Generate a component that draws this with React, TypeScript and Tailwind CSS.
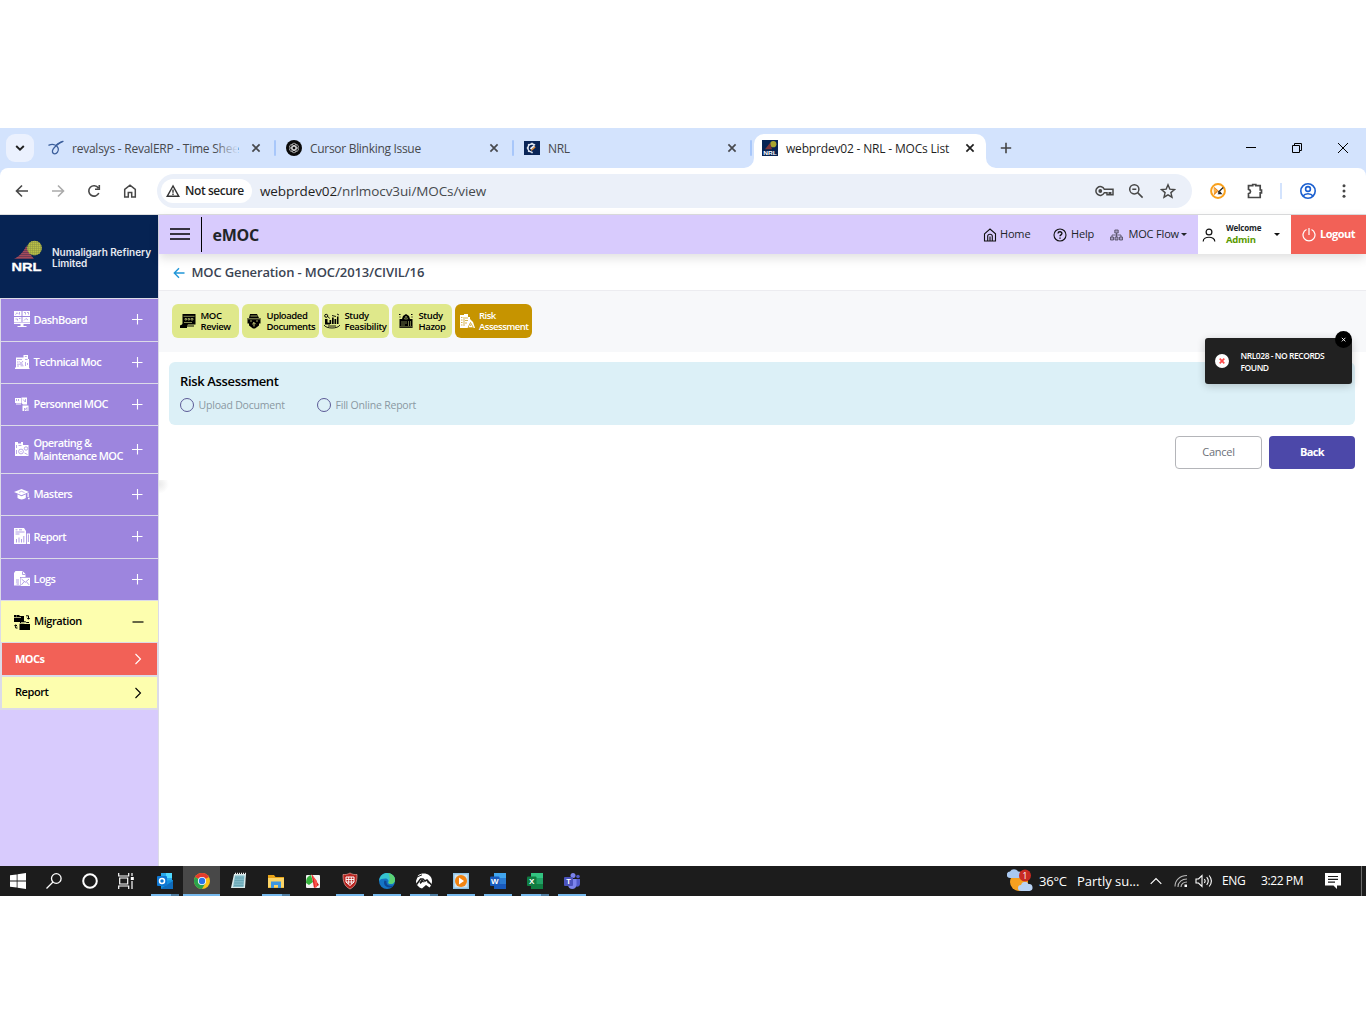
import type { ReactNode } from "react";

interface IconProps {
  className?: string;
}

interface MenuItem {
  label: ReactNode;
  icon: ReactNode;
  height: string;
}

/* ---------- small shared glyphs ---------- */

const CloseGlyph = ({ className = "" }: IconProps) => (
  <svg className={className} width="16" height="16" viewBox="0 0 16 16" fill="none" stroke="currentColor" strokeWidth="1.700">
    <path d="M4.400 4.400l7.200 7.200M11.600 4.400l-7.200 7.200" />
  </svg>
);

const Plus = () => (
  <svg width="12" height="12" viewBox="0 0 12 12" stroke="white" strokeWidth="1.100">
    <path d="M6.500 1v10.500M1 6.500h10.500" />
  </svg>
);

const ChevronRight = () => (
  <svg width="12" height="12" viewBox="0 0 12 12" fill="none" stroke="currentColor" strokeWidth="1.100">
    <path d="M3.500 1l5 5-5 5" />
  </svg>
);

const NrlMark = () => (
  <svg width="16" height="16" viewBox="0 0 16 16">
    <rect width="16" height="16" fill="#062353" />
    <circle cx="11.300" cy="4.200" r="3.100" fill="#a9a52f" />
    <path d="M3 9.200L8 3l2 6.200z" fill="#7d3437" />
    <text x="1.300" y="15.300" fontSize="5.500" fontWeight="700" fill="white" fontFamily="Liberation Sans" textLength="13.500" lengthAdjust="spacingAndGlyphs">
      NRL
    </text>
  </svg>
);

/* ---------- browser chrome ---------- */

const SwirlFavicon = () => (
  <svg width="16" height="16" viewBox="0 0 16 16" fill="none" stroke="#3c5f9c" strokeWidth="1.300" strokeLinecap="round">
    <path d="M1 5.200C3 4.300 5 4.200 7 5c3.500 1.500 4.200 4.800 2.500 7.200-1.400 2.100-4.300 2.200-5 0C3.700 9.500 6 7.500 9 5 11 3.300 12.500 2 15 1.300" />
    <path d="M8 5.300c1.500-2 3.500-2.500 6.500-3.800" />
  </svg>
);

const GptFavicon = () => (
  <svg width="16" height="16" viewBox="0 0 16 16" fill="none">
    <circle cx="8" cy="8" r="8" fill="#0a0a0a" />
    <g stroke="#cfcfcf" strokeWidth="0.700">
      <rect x="6" y="3.200" width="4" height="7" rx="2" transform="rotate(0 8 8)" />
      <rect x="6" y="3.200" width="4" height="7" rx="2" transform="rotate(60 8 8)" />
      <rect x="6" y="3.200" width="4" height="7" rx="2" transform="rotate(120 8 8)" />
      <rect x="6" y="3.200" width="4" height="7" rx="2" transform="rotate(180 8 8)" />
      <rect x="6" y="3.200" width="4" height="7" rx="2" transform="rotate(240 8 8)" />
      <rect x="6" y="3.200" width="4" height="7" rx="2" transform="rotate(300 8 8)" />
    </g>
  </svg>
);

const GearFavicon = () => (
  <svg width="16" height="16" viewBox="0 0 16 16" fill="none">
    <rect y="1" width="16" height="14" fill="#092457" />
    <circle cx="8" cy="8" r="4.100" stroke="#e8edf6" strokeWidth="1.500" strokeDasharray="15.500 10.300" transform="rotate(95 8 8)" />
    <path d="M8 2.800v1.500M4.200 4.200l1 1M2.800 8h1.500M4.200 11.800l1-1M8 13.200v-1.500" stroke="#e8edf6" strokeWidth="1.500" />
    <path d="M6.500 9L10.300 5.700" stroke="#e8edf6" strokeWidth="2" />
    <path d="M7.500 11l4-3.500-.5-1.300-4 3.500z" fill="#e88a2d" />
  </svg>
);

const Tab = ({ icon, title, fade }: { icon: ReactNode; title: string; fade?: boolean }) => (
  <div className="flex h-10 w-[238px] items-center text-[#47494d]">
    <span className="mr-2 flex">{icon}</span>
    <span className={`relative mt-[2px] w-[166px] whitespace-nowrap text-[12px] ${fade ? "tracking-[-0.24px]" : "tracking-[-0.3px]"}`}>
      {title}
      {fade && <span className="absolute right-0 top-0 h-full w-6 bg-gradient-to-r from-transparent to-[#d3e3fd]" />}
    </span>
    <CloseGlyph className="ml-[10px]" />
    <span className="ml-[10px] h-4 w-[2px] rounded bg-[#a8c7fa]" />
  </div>
);

const TabStrip = () => (
  <div className="flex h-10 bg-[#d3e3fd]">
    <div className="ml-[6px] mt-[6px] flex h-7 w-7 items-center justify-center rounded-[9px] bg-[#ebf1fe]">
      <svg width="12" height="12" viewBox="0 0 12 12" fill="none" stroke="#1f1f1f" strokeWidth="1.900">
        <path d="M2.200 4l3.800 3.700L9.800 4" />
      </svg>
    </div>
    <div className="ml-[14px] flex">
      <Tab icon={<SwirlFavicon />} title="revalsys - RevalERP - Time Shee" fade />
      <Tab icon={<GptFavicon />} title="Cursor Blinking Issue" />
      <div className="w-[230px] overflow-hidden">
        <Tab icon={<GearFavicon />} title="NRL" />
      </div>
    </div>
    <div className="relative mt-[6px] flex h-[34px] w-[232px] items-center rounded-t-[10px] bg-white pb-[5px] pl-2 text-[#1f1f1f]">
      <svg className="absolute -left-[10px] bottom-0" width="10" height="10">
        <path d="M10 0v10H0A10 10 0 0 0 10 0z" fill="white" />
      </svg>
      <svg className="absolute -right-[10px] bottom-0" width="10" height="10">
        <path d="M0 0v10h10A10 10 0 0 1 0 0z" fill="white" />
      </svg>
      <div className="mb-px">
        <NrlMark />
      </div>
      <span className="ml-2 w-[166px] whitespace-nowrap text-[12px] tracking-[-0.18px]">webprdev02 - NRL - MOCs List</span>
      <CloseGlyph className="mb-px ml-[10px]" />
    </div>
    <svg className="ml-[13px] mt-[13px]" width="14" height="14" viewBox="0 0 14 14" stroke="#444" strokeWidth="1.600">
      <path d="M7 1.800v10.500M1.800 7h10.400" />
    </svg>
    <div className="ml-auto mt-[13px] flex h-[14px] items-center text-black">
      <svg width="14" height="14" viewBox="0 0 14 14" stroke="currentColor">
        <path d="M2 6.500h10" />
      </svg>
      <svg className="ml-8" width="14" height="14" viewBox="0 0 14 14" fill="none" stroke="currentColor">
        <path d="M2.500 4.500h7v7h-7zM4.500 4.500v-2h7v7h-2" />
      </svg>
      <svg className="ml-8 mr-4" width="14" height="14" viewBox="0 0 14 14" stroke="currentColor">
        <path d="M2 2l10 10M12 2L2 12" />
      </svg>
    </div>
  </div>
);

const Toolbar = () => (
  <div className="bg-[#d3e3fd]">
    <div className="flex h-[46px] items-center rounded-t-[8px] bg-white text-[#474747]">
      <svg className="ml-[14px]" width="16" height="16" viewBox="0 0 16 16" fill="none" stroke="currentColor" strokeWidth="1.600">
        <path d="M14 8H3M8 2.500L2.500 8 8 13.500" />
      </svg>
      <svg className="ml-5 text-[#ababab]" width="16" height="16" viewBox="0 0 16 16" fill="none" stroke="currentColor" strokeWidth="1.600">
        <path d="M2 8h11M8 2.500L13.500 8 8 13.500" />
      </svg>
      <svg className="ml-5" width="16" height="16" viewBox="0 0 16 16" fill="none" stroke="currentColor" strokeWidth="1.600">
        <path d="M12.800 10A5.200 5.200 0 1 1 12.300 5M13.300 1.900v4.300H9" />
      </svg>
      <svg className="ml-5" width="16" height="16" viewBox="0 0 16 16" fill="none" stroke="currentColor" strokeWidth="1.500">
        <path d="M2.700 14V6.400L8 2.200l5.300 4.200V14H9.700V9.500H6.300V14z" />
      </svg>
      <div className="ml-[19px] flex h-[34px] w-[1035px] items-center rounded-full bg-[#ebf0f9] pl-1">
        <div className="flex h-6 w-[91px] items-center rounded-full bg-white pl-[5px] text-[#1f1f1f]">
          <svg width="14" height="14" viewBox="0 0 14 14" fill="none" stroke="#333" strokeWidth="1.400">
            <path d="M7 2L1.200 12.300h11.600zM7 5.500v3.300M7 9.500v1.400" />
          </svg>
          <span className="ml-[5px] whitespace-nowrap text-[12px] font-semibold tracking-[-0.42px]">Not secure</span>
        </div>
        <span className="ml-2 text-[13.500px] tracking-[-0.1px] text-[#46494d]">
          <span className="text-[#1f1f1f]">webprdev02</span>/nrlmocv3ui/MOCs/view
        </span>
        <svg className="ml-auto" width="19" height="12" viewBox="0 0 19 12" fill="none" stroke="currentColor" strokeWidth="1.500">
          <path d="M9.300 4.200A4.400 4.400 0 1 0 9.300 7.800H12v1.900h2.200V7.800h1.500v1.900H18V4.200z" />
          <circle cx="5.300" cy="6" r="1.900" fill="currentColor" stroke="none" />
        </svg>
        <svg className="ml-[14px]" width="16" height="16" viewBox="0 0 16 16" fill="none" stroke="currentColor" strokeWidth="1.500">
          <circle cx="6.300" cy="6.300" r="4.600" />
          <path d="M9.600 9.600l5 5M4.300 6.300h4" />
        </svg>
        <svg className="ml-4 mr-4" width="16" height="16" viewBox="0 0 16 16" fill="none" stroke="currentColor" strokeWidth="1.400">
          <path d="M8 1.800l1.800 4.300 4.700.4-3.600 3.100 1.100 4.600L8 11.800l-4 2.400 1.100-4.600L1.500 6.500l4.700-.4z" />
        </svg>
      </div>
      <svg className="ml-[18px]" width="16" height="16" viewBox="0 0 16 16" fill="none">
        <circle cx="8" cy="8" r="6.900" stroke="#f9a01b" strokeWidth="2" />
        <path d="M3.500 5l4 3.500L4 11.500z" fill="#f7b04a" />
        <path d="M4 4.500l4.500 4M4 11.500l3-3" stroke="#f08b1a" strokeWidth="1.200" />
        <path d="M13.200 4.500L8 9.500" stroke="#222" strokeWidth="1.200" />
        <path d="M7.500 11.200L10 8.300l2.500 2.900z" fill="#222" />
      </svg>
      <svg className="ml-5" width="18" height="18" viewBox="0 0 18 18" fill="none" stroke="currentColor" strokeWidth="1.700">
        <path d="M2.500 3.700h4.200V2.500h3.100v1.200h4.400v4.300h1.300v2.800h-1.300v4.700H2.500v-3.800c2.700-.6 2.700-3.800 0-4.400z" />
      </svg>
      <span className="ml-4 h-4 w-[2px] bg-[#d3e3fd]" />
      <svg className="ml-[17px]" width="18" height="18" viewBox="0 0 18 18" fill="none" stroke="#1a5fd0" strokeWidth="1.600">
        <circle cx="9" cy="9" r="7.200" />
        <circle cx="9" cy="7" r="2.400" />
        <path d="M4 14c2.200-3 7.800-3 10 0" />
      </svg>
      <svg className="ml-[25px]" width="4" height="16" viewBox="0 0 4 16" fill="currentColor">
        <circle cx="2" cy="2.800" r="1.500" />
        <circle cx="2" cy="8" r="1.500" />
        <circle cx="2" cy="13.200" r="1.500" />
      </svg>
    </div>
  </div>
);

/* ---------- sidebar icons ---------- */

const DashboardIcon = () => (
  <svg width="16" height="16" viewBox="0 0 16 16" fill="white">
    <path d="M0 0h7.500v5H0zM8.500 0H16v5H8.500zM0 6h7.500v5H0zM8.500 6H16v5H8.500zM0 11.500h16V13H0zM6.500 13h3v2h3v1h-9v-1h3z" />
    <path d="M1.500 3.700l1.500-2 1.500 1.500M5.500 1v2.500M10 1.500h1.500v2M13 1.500h1.500v2M1.500 8h2v1.500M5 7.500h1.500M10 9.500l2-2 2 1.500" stroke="#9d85de" strokeWidth=".7" fill="none" />
  </svg>
);

const TechnicalIcon = () => (
  <svg width="16" height="16" viewBox="0 0 16 16" fill="white">
    <path d="M2 3.500h7.500V1H14v4h1v9h.5v1H1v-1.500h1z" />
    <path d="M3 5.500h5M3 8h1.500M5.500 7.500l1.500 2L9 7M10.800 2.500h2M11 5.500h2.500M3 12h2M6.500 11.800h3M11.500 8v4M13.500 9v2M3 10.200h6" stroke="#9d85de" strokeWidth=".7" fill="none" />
  </svg>
);

const PersonnelIcon = () => (
  <svg width="16" height="16" viewBox="0 0 16 16" fill="white">
    <path d="M1 2h6v5H1zM7.500 1.500H13v7H9L7.500 7zM8.500 9.500h6V15h-6zM2 7.500h5v1H2z" />
    <path d="M2.500 3v2M4.500 3v2M9.200 3.500l2 2.500M11.500 3v3M10.500 15v-3l1 1.500 1.500-2V15" stroke="#9d85de" strokeWidth=".7" fill="none" />
  </svg>
);

const OperatingIcon = () => (
  <svg width="16" height="16" viewBox="0 0 16 16" fill="white">
    <path d="M1 1h3v1.500h3V1h2v3h5.500v11H1z" />
    <g stroke="#9d85de" strokeWidth=".7" fill="none">
      <circle cx="7" cy="10.500" r="2.400" />
      <circle cx="12" cy="7.500" r="1.700" />
      <path d="M2.500 4v3M4.500 4.500h3M2.500 9v4M10.500 12l3 1.500M7 10v1.200" />
    </g>
  </svg>
);

const MastersIcon = () => (
  <svg width="16" height="16" viewBox="0 0 16 16" fill="white">
    <path d="M7.500 3L15 6 7.500 9.200 0 6z" />
    <path d="M3.500 8.300l4 1.900 4.300-1.900v3.700c-2.300 1.900-6 1.900-8.300 0zM13.500 7h1.200v4h-1.200zM14 11.700h1.600v1.500H14z" />
    <path d="M5 6.300l2.500-1 3 1.200" stroke="#9d85de" strokeWidth=".6" fill="none" />
  </svg>
);

const ReportIcon = () => (
  <svg width="16" height="16" viewBox="0 0 16 16" fill="white">
    <path d="M0 0h10l2 3v13H0zM12.800 5.500H16V16h-3.200z" />
    <path d="M1.500 1.800h2M5 1.800h3M1.500 4h9M2.500 11v3.500M5 9.500v5M7.500 11v3.500M9.800 8v6.500M1.500 6h4M14.400 6.500V14" stroke="#9d85de" strokeWidth=".8" fill="none" />
  </svg>
);

const LogsIcon = () => (
  <svg width="16" height="16" viewBox="0 0 16 16" fill="white">
    <path d="M1.500 0h7l3 3v3H6v8.500H0V2z" />
    <path d="M6.500 6.700H16V15H6.500z" />
    <path d="M2 9h3M2 11h3M2.500 13h2.500M7.500 8l3.800 3.300L15 8M7.500 13.800l2.500-3M15 13.800l-2.500-3M8.500.5v3h3" stroke="#9d85de" strokeWidth=".8" fill="none" />
  </svg>
);

const MigrationIcon = () => (
  <svg width="16" height="16" viewBox="0 0 16 16" fill="black">
    <path d="M0 1h5l1 1h4v6H0zM5.500 9h4l1 1H16v6H5.500z" />
    <path d="M0 3.500h7M2 2h1M5 9.500h5M10 7.300h5" stroke="#fdfeae" strokeWidth=".7" />
    <path d="M6.500 9V7.800h5l.8.7H15" fill="none" stroke="black" />
    <path d="M12 1.800h2.500V5M13 3.800l1.500 1.500L16 3.800M3.500 14H1.700v-3M.3 12.200l1.400-1.500 1.500 1.500" fill="none" stroke="black" />
  </svg>
);

const menu: MenuItem[] = [
  { label: "DashBoard", icon: <DashboardIcon />, height: "h-[43px]" },
  { label: "Technical Moc", icon: <TechnicalIcon />, height: "h-[42px]" },
  { label: "Personnel MOC", icon: <PersonnelIcon />, height: "h-[42px]" },
  { label: <>Operating &amp;<br />Maintenance MOC</>, icon: <OperatingIcon />, height: "h-[48px]" },
  { label: "Masters", icon: <MastersIcon />, height: "h-[42px]" },
  { label: "Report", icon: <ReportIcon />, height: "h-[43px]" },
  { label: "Logs", icon: <LogsIcon />, height: "h-[42px]" },
];

const Sidebar = () => (
  <aside className="w-[159px] border-r border-[#dcdbe8] bg-[#d8cbfd]">
    <div className="flex h-[83px] items-center bg-[#062353] pl-[11px]">
      <svg className="mb-px" width="32" height="34" viewBox="0 0 32 34">
        <defs>
          <pattern id="dots" width="2" height="2" patternUnits="userSpaceOnUse">
            <rect width="1.500" height="1.500" fill="#b9bf45" />
          </pattern>
          <pattern id="lines" width="2" height="2" patternUnits="userSpaceOnUse">
            <rect width="2" height="1.300" fill="#a34a5a" />
          </pattern>
        </defs>
        <path d="M3 20C9 17 13 12 15.500 6.500 17 12 19 15 23 20z" fill="#5a3352" />
        <path d="M3 20C9 17 13 12 15.500 6.500 17 12 19 15 23 20z" fill="url(#lines)" />
        <circle cx="23.500" cy="9" r="7.300" fill="#8b9444" />
        <circle cx="23.500" cy="9" r="7.300" fill="url(#dots)" />
        <text x="0.500" y="31.800" textLength="30" lengthAdjust="spacingAndGlyphs" fontSize="11.500" fontWeight="700" fill="white" stroke="white" strokeWidth=".3" fontFamily="Liberation Sans">
          NRL
        </text>
      </svg>
      <p className="ml-[9px] mt-[3px] whitespace-nowrap font-['Inter',sans-serif] text-[10px] font-semibold leading-[11px] tracking-[-0.02px] text-[#e6eaf2]">
        Numaligarh Refinery
        <br />
        Limited
      </p>
    </div>
    <nav className="border-l border-t border-[#dcdbe8] text-[11px] font-semibold tracking-[-0.58px]">
      {menu.map((item, i) => (
        <div key={i} className={`flex items-center border-b border-[#dcdbe8] bg-[#9d85de] pb-[2px] pl-[13px] pr-[15px] text-white ${item.height}`}>
          {item.icon}
          <span className="ml-[3.500px] flex-1 whitespace-nowrap leading-[13px]">{item.label}</span>
          <Plus />
        </div>
      ))}
      <div className="flex h-[42px] items-center border-b border-[#dcdbe8] bg-[#fdfeae] pl-[13px] pr-[14px] text-black">
        <MigrationIcon />
        <span className="ml-1 flex-1 tracking-[-0.42px]">Migration</span>
        <svg width="12" height="12" viewBox="0 0 12 12" stroke="black">
          <path d="M.5 6h11" strokeWidth="1.200" />
        </svg>
      </div>
      <div className="border-b-2 border-l border-r border-[#dcdbe8] tracking-[-0.42px]">
        <div className="flex h-[34px] items-center justify-between border-b-2 border-[#dcdbe8] bg-[#f26157] pl-[13px] pr-[13px] text-white">
          <span className="font-bold tracking-[-0.55px]">MOCs</span>
          <ChevronRight />
        </div>
        <div className="flex h-[31px] items-center justify-between bg-[#fdfeae] pl-[13px] pr-[13px] text-black">
          Report
          <ChevronRight />
        </div>
      </div>
    </nav>
  </aside>
);

/* ---------- main area ---------- */

const Header = () => (
  <header className="relative z-10 flex h-[39px] items-center bg-[#d8cbfd] text-[11px] text-[#212529] shadow-[0_4px_10px_rgba(0,0,0,0.13)]">
    <svg className="mb-[2px] ml-[11px]" width="20" height="14" viewBox="0 0 20 14" stroke="black" strokeWidth="1.700">
      <path d="M0 2h20M0 7h20M0 12h20" />
    </svg>
    <span className="ml-[11px] h-[35px] w-px bg-black" />
    <h1 className="ml-[10.500px] mt-px text-[16px] font-bold tracking-[-0.25px]">eMOC</h1>
    <div className="ml-auto flex items-center">
      <svg width="14" height="14" viewBox="0 0 14 14" fill="none" stroke="#111" strokeWidth="1.100">
        <path d="M1.500 5.800L7 1l5.500 4.800V13h-11zM4.700 13V8.200c0-2.600 4.600-2.600 4.600 0V13M7 8.500V13" />
      </svg>
      <span className="ml-[3px] w-[53px] tracking-[-0.15px]">Home</span>
      <svg width="14" height="14" viewBox="0 0 14 14" fill="none" stroke="#111" strokeWidth="1.100">
        <circle cx="7" cy="7" r="6" />
        <path d="M5 5.500c.2-2.400 4-2.200 3.900 0C8.800 6.900 7 6.900 7 8.300M7 9.500v1.300" strokeWidth="1.400" />
      </svg>
      <span className="ml-[4px] w-[39px] tracking-[-0.15px]">Help</span>
      <svg width="13" height="12" viewBox="0 0 13 12" fill="#a79dc4" stroke="#4d475c" strokeWidth=".8">
        <path d="M4.800 1h3.400v3H4.800zM.5 8h3v3h-3zM5 8h3v3H5zM9.500 8h3v3h-3z" />
        <path d="M6.500 4v4M2 8V6h9v2" fill="none" />
      </svg>
      <span className="ml-[5.500px] whitespace-nowrap tracking-[-0.16px]">MOC Flow</span>
      <span className="ml-[2px] mr-[11px] border-x-[3px] border-t-[3px] border-x-transparent border-t-[#212529]" />
    </div>
    <div className="flex h-full w-[93px] items-center bg-white">
      <svg className="ml-[4px]" width="14" height="14" viewBox="0 0 14 14" fill="none" stroke="#111" strokeWidth="1.200">
        <circle cx="7" cy="4" r="2.900" />
        <path d="M1.200 13.500c0-5.700 11.600-5.700 11.600 0" />
      </svg>
      <p className="mb-[2px] ml-[10px] w-[48px] text-[8px] font-bold leading-[12px] tracking-[-0.18px]">
        Welcome
        <br />
        <span className="text-[9.500px] tracking-[-0.28px] text-[#5a9a00]">Admin</span>
      </p>
      <span className="border-x-[3px] border-t-[3px] border-x-transparent border-t-[#111]" />
    </div>
    <div className="flex h-full w-[75px] items-center bg-[#f26157] font-bold tracking-[-0.5px] text-white">
      <svg className="ml-[11px] mr-1" width="14" height="14" viewBox="0 0 14 14" fill="none" stroke="currentColor" strokeWidth="1.200">
        <path d="M4.500 1.500a6 6 0 1 0 5 0M7 0v7" />
      </svg>
      Logout
    </div>
  </header>
);

const ReviewIcon = () => (
  <svg width="16" height="16" viewBox="0 0 16 16" fill="black">
    <path d="M2.500 1h13v10.500H8l-1 1h7v1H7V15H0v-2.500l2-1 .5-1z" />
    <path d="M3.500 3.300h11M5 5.500h1.500V7H5zM8 5.500h1.500V7H8zM11 5.500h2V7h-2zM4 9.500h8" stroke="#dfe88b" strokeWidth=".6" fill="none" />
  </svg>
);

const UploadedIcon = () => (
  <svg width="16" height="16" viewBox="0 0 16 16" fill="black">
    <path d="M4 1h7l2 4h1.500v5.500H13v2l-4 3H7l-4-3v-2H1.500V5H3z" />
    <path d="M4.500 3h7M2 5.800h12M4 8h2M10 8h2" stroke="#dfe88b" strokeWidth=".7" fill="none" />
    <path d="M8 13.500V9.500M6.300 11.200L8 9.500l1.700 1.700" stroke="#dfe88b" strokeWidth=".9" fill="none" />
  </svg>
);

const FeasibilityIcon = () => (
  <svg width="16" height="16" viewBox="0 0 16 16" fill="black">
    <path d="M5.500 7h1.700v4H5.500zM8 4.500h1.700V11H8zM10.500 6h1.700v5h-1.700zM13 3.500h1.500V11H13zM1 6h2.500v3.500L6 10v1.500H1z" />
    <circle cx="2.200" cy="2.800" r="1.500" fill="none" stroke="black" />
    <path d="M4 3.500l1.500 2M8 2.500L12 3.500M13 1l2 1M0 12c2 4 14 4 16 0M4 13h8" fill="none" stroke="black" strokeWidth=".9" />
  </svg>
);

const HazopIcon = () => (
  <svg width="16" height="16" viewBox="0 0 16 16" fill="black">
    <path d="M1.500 6H4l1-3 3-2 3 2 1 3h2.500v9h-13z" />
    <path d="M8 3l1.500 3h-3zM4 8v5M6 8v5M10.500 8v5M12.500 8v5M2 13.800h12M8 8v3" stroke="#dfe88b" strokeWidth=".5" fill="none" />
    <path d="M1 1.500h2M13 1.500h2M1.500 4h1M13.500 4h1" stroke="black" strokeDasharray="1 .5" />
  </svg>
);

const RiskIcon = () => (
  <svg width="16" height="16" viewBox="0 0 16 16" fill="white">
    <path d="M1 2h4V1h4v3h2v2l3 3 2 6H1z" />
    <path d="M5 4v9M2 4.500h1.500M2 7h1.500M2 9.500h1.500M2 12h1.500M6 5h3M6 7.500h3M6 10h2M9 14.500l2.500-5 2.800 5zM11.600 11.500v1.500" stroke="#c69400" strokeWidth=".7" fill="none" />
  </svg>
);

const steps = [
  { lines: ["MOC", "Review"], icon: <ReviewIcon />, box: "w-[67px] pl-[8px] tracking-[-0.38px]" },
  { lines: ["Uploaded", "Documents"], icon: <UploadedIcon />, box: "w-[77px] pl-[4px] tracking-[-0.42px]" },
  { lines: ["Study", "Feasibility"], icon: <FeasibilityIcon />, box: "w-[67px] pl-[2px] tracking-[-0.36px]" },
  { lines: ["Study", "Hazop"], icon: <HazopIcon />, box: "w-[60px] pl-[6px] tracking-[-0.36px]" },
];

const Steps = () => (
  <div className="flex h-[61px] gap-[3px] bg-[#f7f8fa] pl-[13px] pt-[13px] text-[9.500px] font-semibold leading-[11px] text-black">
    {steps.map((step) => (
      <div key={step.lines.join(" ")} className={`flex h-[34px] items-center gap-[4.500px] whitespace-nowrap rounded-[6px] bg-[#dfe88b] ${step.box}`}>
        {step.icon}
        <span>
          {step.lines[0]}
          <br />
          {step.lines[1]}
        </span>
      </div>
    ))}
    <div className="flex h-[34px] w-[77px] items-center gap-[4px] rounded-[6px] bg-[#c69400] pl-[4px] tracking-[-0.5px] text-white">
      <RiskIcon />
      <span>
        Risk
        <br />
        Assessment
      </span>
    </div>
  </div>
);

const Toast = () => (
  <div className="absolute right-[14px] top-[123px] z-20 flex h-[46px] w-[147px] items-center rounded-[3px] bg-[#212121] pl-[10px] text-white shadow-[0_2px_8px_rgba(0,0,0,0.2)]">
    <svg width="14" height="14" viewBox="0 0 14 14">
      <circle cx="7" cy="7" r="7" fill="white" />
      <path d="M4.700 4.700l4.600 4.600M9.300 4.700L4.700 9.300" stroke="#ff4b4b" strokeWidth="1.700" />
    </svg>
    <p className="ml-[11.500px] mt-px whitespace-nowrap text-[8.500px] font-semibold leading-[12px] tracking-[-0.46px]">
      NRL028 - NO RECORDS
      <br />
      FOUND
    </p>
    <svg className="absolute -top-[7px] right-0" width="17" height="17" viewBox="0 0 17 17">
      <circle cx="8.500" cy="8.500" r="8.500" fill="black" />
      <path d="M6.800 6.800l3.600 3.600M10.400 6.800l-3.600 3.600" stroke="white" strokeWidth=".9" />
    </svg>
  </div>
);

const RadioOption = ({ label, width }: { label: string; width: string }) => (
  <label className={`flex items-center gap-[5px] ${width}`}>
    <span className="-ml-[0.5px] h-[14px] w-[14px] rounded-full border border-[#5b5a96]" />
    {label}
  </label>
);

const Main = () => (
  <main className="relative flex-1 bg-white">
    <Header />
    <div className="flex h-[37px] items-center border-b border-[#ececf0] pl-[14px] pt-px text-[13px] font-semibold text-[#3b4453]">
      <svg width="12" height="12" viewBox="0 0 12 12" fill="none" stroke="#2196d8" strokeWidth="1.400">
        <path d="M11.500 6H1.500M6 1.300L1.300 6 6 10.700" />
      </svg>
      <h2 className="ml-[6.500px] tracking-[-0.13px]">MOC Generation - MOC/2013/CIVIL/16</h2>
    </div>
    <Steps />
    <section className="ml-[10px] mr-[11px] mt-[10px] h-[63px] rounded-[6px] bg-[#dcf0f7] pl-[11px] pt-[10px]">
      <h3 className="text-[13px] font-semibold leading-[18px] tracking-[-0.35px] text-black">Risk Assessment</h3>
      <div className="mt-[7px] flex text-[10.500px] leading-[16px] tracking-[-0.2px] text-[#8a98a2]">
        <RadioOption label="Upload Document" width="w-[137px]" />
        <RadioOption label="Fill Online Report" width="w-[130px]" />
      </div>
    </section>
    <div className="mr-[11px] mt-[11px] flex justify-end gap-[7px] text-[11px]">
      <button className="h-[33px] w-[87px] rounded-[4px] border border-[#b4b5b9] bg-white tracking-[-0.25px] text-[#6b7078]">Cancel</button>
      <button className="h-[33px] w-[86px] rounded-[4px] bg-[#4c48a9] font-bold tracking-[-0.6px] text-white">Back</button>
    </div>
    <div className="mt-[11px] h-[14px] w-[10px] bg-radial-[at_0%_30%] from-[#e9e9e9] to-white to-70%" />
    <Toast />
  </main>
);

/* ---------- taskbar ---------- */

const OutlookIcon = () => (
  <svg width="18" height="18" viewBox="0 0 18 18">
    <path d="M5 1h11v10H5z" fill="#28a8ea" />
    <path d="M10 1h6v5h-6z" fill="#50d9ff" />
    <path d="M5 9l12-1v9H5z" fill="#1490df" />
    <path d="M5 16.500L17 9v8H5z" fill="#0f6cbd" />
    <rect x="1" y="4" width="10" height="10" rx="1" fill="#0f78d4" />
    <circle cx="6" cy="9" r="2.500" fill="none" stroke="white" strokeWidth="1.500" />
  </svg>
);

const ChromeIcon = () => (
  <svg width="18" height="18" viewBox="0 0 18 18">
    <circle cx="9" cy="9" r="8" fill="#fbc116" />
    <path d="M9 9L2.070 5A8 8 0 0 1 15.930 5z" fill="#e33b2e" />
    <path d="M9 9L2.070 5A8 8 0 0 0 9 17l3.500-6z" fill="#2ba24c" />
    <circle cx="9" cy="9" r="4.100" fill="white" />
    <circle cx="9" cy="9" r="3.200" fill="#2a74e8" />
  </svg>
);

const NotepadIcon = () => (
  <svg width="18" height="18" viewBox="0 0 18 18">
    <path d="M4 2h12l-1 14H1z" fill="#d8e9ea" />
    <path d="M5 3.500h9.500L13.500 15H3z" fill="#7fb9c6" />
    <path d="M5 6h9M4.700 8.500h9M4.300 11h9M4 13.500h9.500" stroke="#5b98a8" strokeWidth=".6" />
    <path d="M5 1.500h11" stroke="#f1f1f1" strokeWidth="1.500" strokeDasharray="1 1" />
  </svg>
);

const FolderIcon = () => (
  <svg width="18" height="18" viewBox="0 0 18 18">
    <path d="M1 3h6l1.500 2H17v11H1z" fill="#e8a317" />
    <path d="M1 6h16v9.500H1z" fill="#fbd568" />
    <path d="M4 9.500h10V16h-3v-3H7v3H4z" fill="#3f97e0" />
  </svg>
);

const FastStoneIcon = () => (
  <svg width="18" height="18" viewBox="0 0 18 18">
    <rect x="2" y="3" width="14" height="13" rx="1" fill="#f3f3f3" />
    <path d="M2 11C2 6 4 4 7 3l2 7-4 3z" fill="#35b13c" />
    <path d="M7.500 2L15 13l-5 3z" fill="#d7221d" />
    <path d="M7.500 2L10 8l1 8 2-1V9z" fill="#f9504a" />
  </svg>
);

const ShieldIcon = () => (
  <svg width="18" height="18" viewBox="0 0 18 18">
    <path d="M9 1c2.500 1.500 4.500 1.700 7 1.500 0 7-1 11.500-7 14.500C3 14 2 9.500 2 2.500 4.500 2.700 6.500 2.500 9 1z" fill="#b92420" stroke="#e6a39b" strokeWidth=".7" />
    <path d="M5 5h8v5l-4 3.500L5 10z" fill="none" stroke="white" />
    <path d="M7.700 5v7M10.300 5v7M5 7.500h8M5 10h8" stroke="white" strokeWidth=".9" />
  </svg>
);

const EdgeIcon = () => (
  <svg width="18" height="18" viewBox="0 0 18 18">
    <circle cx="9" cy="9" r="8" fill="#1474c4" />
    <path d="M1.200 8C2 3.500 5.500 1 9 1c4.500 0 8 3 8 6.700C17 10.500 15 12 12.800 12c-1.800 0-2.800-.8-2.500-1.600.8-2-.6-4-3-4C4.500 6.400 2 7 1.200 9z" fill="#35c3cf" />
    <path d="M10 1.200c4 .2 7 3 7 6.500C17 10.500 15 12 12.800 12c-1.500 0-2.600-.7-2.400-1.400C12.500 8 12 4 10 1.200z" fill="#5bd273" />
    <path d="M6.500 8.500c-1.500 3 .5 7 5 7 2.500 0 4-1.500 4.500-2.500-3 2-8.500.5-7.500-4z" fill="#0d4795" />
  </svg>
);

const PeaksIcon = () => (
  <svg width="18" height="18" viewBox="0 0 18 18">
    <path d="M3 3.500C8-.5 17 2 17 9c0 3-1 5-2.500 6.500L11 13l-4 3.500C3.500 15.500 1 12.500 1 9z" fill="white" />
    <path d="M1.500 12.500L5.500 7h2.500l2 2 2-1 4.500 5" fill="none" stroke="#1c1c1c" strokeWidth="1.500" />
    <path d="M7 7l2.500 3.500L7.500 10l-2 2-1-1.500zM12 8l3 4-2.500-1z" fill="#1c1c1c" />
    <path d="M1 5.500l6-2.700" stroke="#1c1c1c" />
  </svg>
);

const PlayerIcon = () => (
  <svg width="18" height="18" viewBox="0 0 18 18">
    <rect x="1" y="1" width="16" height="16" fill="#8fc4e8" />
    <rect x="2.500" y="2.500" width="13" height="13" fill="#cfe4f2" />
    <circle cx="9" cy="9" r="6" fill="#f28412" />
    <path d="M7 5.500l5 3.500-5 3.500z" fill="white" />
  </svg>
);

const OfficeIcon = ({ letter, dark, mid, light }: { letter: string; dark: string; mid: string; light: string }) => (
  <svg width="18" height="18" viewBox="0 0 18 18">
    <rect x="5" y="1" width="12" height="16" rx="1" fill={mid} />
    <rect x="5" y="1" width="12" height="5" fill={light} />
    <rect x="5" y="12" width="12" height="5" fill={dark} />
    <rect x="1" y="4.500" width="9.500" height="9.500" rx="1" fill={dark} />
    <text x="5.700" y="12" fontSize="8" fontWeight="700" fill="white" textAnchor="middle" fontFamily="Liberation Sans">
      {letter}
    </text>
  </svg>
);

const TeamsIcon = () => (
  <svg width="18" height="18" viewBox="0 0 18 18">
    <circle cx="10" cy="3.500" r="2.500" fill="#7b83eb" />
    <circle cx="15" cy="4.500" r="1.800" fill="#5059c9" />
    <path d="M11 7h6v5c0 2-2 3-4 2.500z" fill="#5059c9" />
    <path d="M5 7h8.500v5.500c0 6-8.500 6-8.500 0z" fill="#7b83eb" />
    <rect x="1" y="5" width="9" height="9" rx="1" fill="#4b53bc" />
    <text x="5.500" y="12.200" fontSize="7.500" fontWeight="700" fill="white" textAnchor="middle" fontFamily="Liberation Sans">
      T
    </text>
  </svg>
);

const apps = [
  { icon: <OutlookIcon />, bar: "double" },
  { icon: <ChromeIcon />, bar: "active" },
  { icon: <NotepadIcon />, bar: "none" },
  { icon: <FolderIcon />, bar: "double" },
  { icon: <FastStoneIcon />, bar: "none" },
  { icon: <ShieldIcon />, bar: "single" },
  { icon: <EdgeIcon />, bar: "single" },
  { icon: <PeaksIcon />, bar: "double" },
  { icon: <PlayerIcon />, bar: "single" },
  { icon: <OfficeIcon letter="W" dark="#185abd" mid="#2b7cd3" light="#41a5ee" />, bar: "single" },
  { icon: <OfficeIcon letter="X" dark="#107c41" mid="#21a366" light="#33c481" />, bar: "double" },
  { icon: <TeamsIcon />, bar: "single" },
];

const Taskbar = () => (
  <footer className="flex h-[30px] items-center bg-[#1c1c1c] text-[12px] text-white">
    <svg className="ml-[10px]" width="16" height="16" viewBox="0 0 16 16" fill="white">
      <path d="M0 2.300l6.700-.9v6.200H0zM7.500 1.300L16 0v7.600H7.500zM0 8.400h6.700v6.200L0 13.700zM7.500 8.400H16V16l-8.500-1.200z" />
    </svg>
    <svg className="ml-5" width="16" height="16" viewBox="0 0 16 16" fill="none" stroke="white" strokeWidth="1.300">
      <circle cx="10.300" cy="5.500" r="4.800" />
      <path d="M7 9L.5 15.500" />
    </svg>
    <svg className="ml-5" width="16" height="16" viewBox="0 0 16 16" fill="none" stroke="white" strokeWidth="2">
      <circle cx="8" cy="8" r="6.800" />
    </svg>
    <svg className="ml-5" width="17" height="16" viewBox="0 0 17 16" fill="none" stroke="white" strokeWidth="1.200">
      <path d="M.7 0v3h10V0M1.700 5h8v6h-8zM.7 16v-3h10v3M14 0v3M14 8v8" />
      <path d="M12.800 4h3v3h-3z" fill="white" stroke="none" />
    </svg>
    <div className="ml-[11px] flex h-full">
      {apps.map((app, i) => (
        <div key={i} className={`flex h-full w-[37px] flex-col items-center ${app.bar === "active" ? "bg-[#484848]" : ""}`}>
          <div className="flex h-7 items-center pt-[2px]">{app.icon}</div>
          {app.bar === "active" && <div className="h-[2px] w-full bg-[#76b9ed]" />}
          {app.bar === "single" && <div className="h-[2px] w-7 bg-[#76b9ed]" />}
          {app.bar === "double" && <div className="h-[2px] w-7 border-r-8 border-[#4f7ea3] bg-[#76b9ed]" />}
        </div>
      ))}
    </div>
    <svg className="ml-auto" width="26" height="24" viewBox="0 0 26 24">
      <circle cx="12" cy="13" r="9" fill="#f6a01f" />
      <path d="M3 9a3.200 3.200 0 0 1 0-6.400 4.500 4.500 0 0 1 8 0A3.200 3.200 0 0 1 12 9z" fill="#a9c8f0" />
      <path d="M14 22a3 3 0 0 1 0-6 4 4 0 0 1 7.500-1 3.500 3.500 0 0 1 1 7z" fill="#b9d3f5" />
      <circle cx="18" cy="6.500" r="6" fill="#c92a22" />
      <text x="18" y="9.700" fontSize="8.500" fill="white" textAnchor="middle" fontFamily="Open Sans">
        1
      </text>
    </svg>
    <span className="ml-[6px] mt-[2px] w-[38px] text-[13px] tracking-[-0.2px]">36°C</span>
    <span className="mt-[2px] w-[73px] whitespace-nowrap text-[13px] tracking-[-0.02px]">Partly su...</span>
    <svg width="12" height="8" viewBox="0 0 12 8" fill="none" stroke="white" strokeWidth="1.200">
      <path d="M.7 6.800L6 1.500l5.300 5.300" />
    </svg>
    <svg className="ml-[12px]" width="14" height="14" viewBox="0 0 14 14" fill="none" stroke="#bbb" strokeWidth="1.100">
      <path d="M1 12.500C1 6 6 1.500 13 1.500M4 13c0-5 4-8 9-8M7 13c0-3 2.500-5 6-5" />
      <path d="M10.500 10.500H13V13h-2.500z" fill="white" stroke="none" />
    </svg>
    <svg className="ml-[7px]" width="18" height="14" viewBox="0 0 18 14" fill="none" stroke="white" strokeWidth="1.100">
      <path d="M1 5v4h2.500L7 12.500v-11L3.500 5zM9.300 5c1 1.200 1 2.800 0 4M11.700 3.200c1.900 2.300 1.900 5.300 0 7.600M14.200 1.500c2.800 3.500 2.800 7.500 0 11" />
    </svg>
    <span className="ml-[9px] w-[39px] text-[12px] tracking-[-0.4px]">ENG</span>
    <span className="w-[64px] whitespace-nowrap text-[12px] tracking-[-0.4px]">3:22 PM</span>
    <svg width="16" height="16" viewBox="0 0 16 16">
      <path d="M0 0h16v12.500h-4V16l-3.500-3.500H0z" fill="white" />
      <path d="M3 3.500h10M3 6.300h10M3 9.200h7" stroke="#1c1c1c" strokeWidth="1.200" />
    </svg>
    <span className="ml-[20px] mr-[4px] h-full w-px bg-[#6a6a6a]" />
  </footer>
);

export default function App() {
  return (
    <div className="h-[1024px] w-[1366px] overflow-hidden bg-white pt-32 font-['Open_Sans',sans-serif]">
      <TabStrip />
      <Toolbar />
      <div className="flex h-[652px] border-t border-[#dedfe0]">
        <Sidebar />
        <Main />
      </div>
      <Taskbar />
    </div>
  );
}
